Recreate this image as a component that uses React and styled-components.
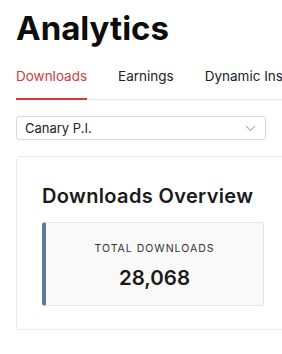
import React from "react";
import styled, { createGlobalStyle } from "styled-components";

const GlobalStyle = createGlobalStyle`
  html, body {
    margin: 0;
    padding: 0;
    overflow: hidden;
    background: #fff;
  }
  body {
    font-family: Inter, "Noto Sans", sans-serif;
    color: #1a1a1a;
  }
`;

const Page = styled.div`
  width: 300px;
  padding: 10px 0 0 16px;
`;

const Title = styled.h1`
  margin: 0;
  font-size: 33px;
  line-height: 36px;
  font-weight: 700;
  color: #0d0d0d;
`;

const Tabs = styled.div`
  display: flex;
  gap: 31px;
  margin-top: 21px;
  border-bottom: 1px solid #e6e6e6;
  white-space: nowrap;
`;

const Tab = styled.div`
  font-size: 13.5px;
  line-height: 18px;
  padding-bottom: 13px;
  color: ${(p) => (p.$active ? "#d23b3b" : "#222")};
  border-bottom: 2px solid ${(p) => (p.$active ? "#d23b3b" : "transparent")};
  margin-bottom: -1px;
`;

const Select = styled.div`
  display: flex;
  align-items: center;
  justify-content: space-between;
  box-sizing: border-box;
  width: 250px;
  height: 24px;
  margin-top: 16px;
  padding: 0 9px 0 8px;
  border: 1px solid #d9d9d9;
  border-radius: 3px;
  font-size: 13px;
  color: #222;
`;

const Card = styled.div`
  box-sizing: border-box;
  width: 274px;
  margin-top: 16px;
  padding: 27px 25px 23px;
  border: 1px solid #ececec;
  border-radius: 4px;
`;

const CardTitle = styled.h2`
  margin: 0;
  font-size: 20px;
  line-height: 24px;
  font-weight: 600;
  letter-spacing: 0.35px;
  color: #1a1a1a;
`;

const Stat = styled.div`
  display: flex;
  flex-direction: column;
  align-items: center;
  margin-top: 14px;
  height: 84px;
  box-sizing: border-box;
  padding-top: 19px;
  background: #f9f9f9;
  border: 1px solid #e6e6e6;
  border-left: 4px solid #5b7b98;
  border-radius: 3px;
`;

const StatLabel = styled.div`
  font-size: 10.5px;
  line-height: 14px;
  letter-spacing: 1px;
  color: #333;
`;

const StatValue = styled.div`
  margin-top: 9px;
  font-size: 20.5px;
  line-height: 26px;
  font-weight: 600;
  color: #1a1a1a;
`;

function Chevron() {
  return (
    <svg width="11" height="7" viewBox="0 0 11 7" fill="none">
      <path d="M1 1l4.5 4.5L10 1" stroke="#b5b5b5" strokeWidth="1.1" />
    </svg>
  );
}

export default function App() {
  return (
    <Page>
      <GlobalStyle />
      <Title>Analytics</Title>
      <Tabs>
        <Tab $active>Downloads</Tab>
        <Tab>Earnings</Tab>
        <Tab>Dynamic Insights</Tab>
      </Tabs>
      <Select>
        <span>Canary P.I.</span>
        <Chevron />
      </Select>
      <Card>
        <CardTitle>Downloads Overview</CardTitle>
        <Stat>
          <StatLabel>TOTAL DOWNLOADS</StatLabel>
          <StatValue>28,068</StatValue>
        </Stat>
      </Card>
    </Page>
  );
}
